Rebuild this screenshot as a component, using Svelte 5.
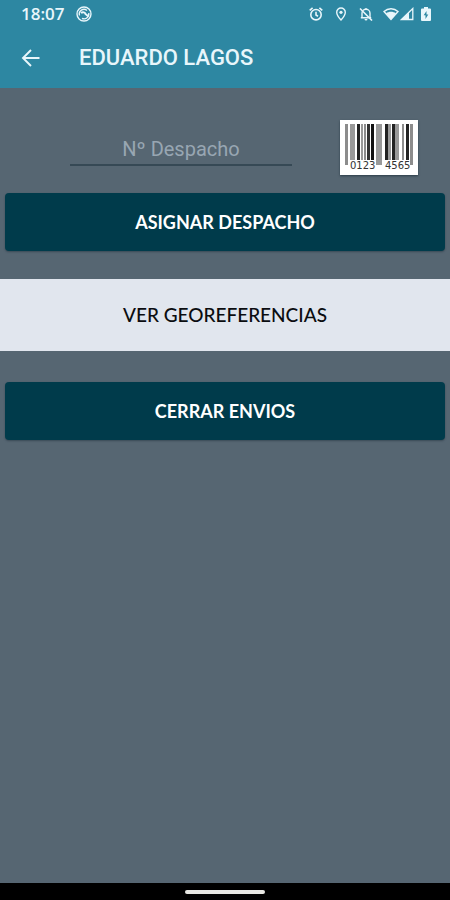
<script lang="ts">
  let despacho = $state("");

  // x, width, shade, long bar
  const BARS: Array<[number, number, string, boolean]> = [
    [5, 3, "#8c8c8c", true],
    [10, 5, "#999", false],
    [17, 3, "#222", false],
    [21, 2, "#999", false],
    [24, 2, "#8c8c8c", false],
    [27, 3, "#333", false],
    [31, 3, "#111", false],
    [36, 6, "#999", true],
    [45, 3, "#222", false],
    [48, 3, "#999", false],
    [52, 3, "#222", false],
    [55, 4, "#999", false],
    [62, 2, "#8c8c8c", false],
    [66, 3, "#222", false],
    [70, 3, "#8c8c8c", true],
  ];
</script>

<div class="screen">
  <div class="status">
    <div class="left">
      <span class="time">18:07</span>
      <svg width="16" height="16" viewBox="0 0 16 16" aria-hidden="true">
        <g fill="none" stroke="currentColor" stroke-width="1.4">
          <circle cx="8" cy="8" r="7" />
          <path d="M3.5 9.5A4.700 4.700 0 0 1 11 4.500M12.700 7A4.700 4.700 0 0 1 6 12.300" />
          <path d="M5 7c2-1.500 4-.5 4.500 1l3 2.500" stroke-width="2" />
        </g>
      </svg>
    </div>
    <div class="icons" aria-hidden="true">
      <svg class="alarm" width="14" height="14" viewBox="0 0 14 14">
        <g fill="none" stroke="currentColor" stroke-width="1.6">
          <circle cx="7" cy="7.700" r="5.200" />
          <path d="M7 4.800v3.200l2 1.200M.7 3.300l2.900-2.500M13.300 3.300l-2.900-2.500" />
        </g>
      </svg>
      <svg class="pin" width="12" height="14" viewBox="0 0 12 14">
        <path d="M6 1a4.300 4.300 0 0 0-4.300 4.300C1.700 8.500 6 13 6 13s4.300-4.500 4.300-7.700A4.300 4.300 0 0 0 6 1z" fill="none" stroke="currentColor" stroke-width="1.400" />
        <circle cx="6" cy="5.300" r="1.600" fill="currentColor" />
      </svg>
      <svg class="bell" width="14" height="14" viewBox="0 0 14 14">
        <path d="M3 10.700h8V6.300a4 4 0 0 0-8 0v4.400zM1.800 10.700h10.400M7 1v1.500" fill="none" stroke="currentColor" stroke-width="1.400" />
        <path d="M5.500 12h3a1.500 1.500 0 0 1-3 0z" fill="currentColor" />
        <path d="M1 1.500l12 12" stroke="currentColor" stroke-width="1.600" />
      </svg>
      <svg class="wifi" width="16" height="14" viewBox="0 0 16 14">
        <path d="M1 4.500C5 .8 11 .8 15 4.500L8 12.500z" fill="none" stroke="currentColor" stroke-width="1.400" />
        <path d="M3 6.300C6 4.300 10 4.300 13 6.300L8 12.500z" fill="currentColor" />
      </svg>
      <svg class="signal" width="14" height="14" viewBox="0 0 14 14">
        <path d="M12.800 1.500v11H1.500z" fill="none" stroke="currentColor" stroke-width="1.300" />
        <path d="M9 5.400v7.100H1.500z" fill="currentColor" />
      </svg>
      <svg class="battery" width="10" height="14" viewBox="0 0 10 14">
        <path d="M3 0h4v1.500h2q1 0 1 1V13q0 1-1 1H1q-1 0-1-1V2.500q0-1 1-1h2z" fill="currentColor" />
        <path d="M5.500 4L2.700 8.300h1.800V12l2.800-4.600H5.500z" fill="#2d87a2" />
      </svg>
    </div>
  </div>

  <header>
    <button class="back" aria-label="Volver">
      <svg width="20" height="20" viewBox="0 0 20 20">
        <path d="M18.500 10H2.500M10 2L2 10l8 8" fill="none" stroke="currentColor" stroke-width="1.900" />
      </svg>
    </button>
    <h1>EDUARDO LAGOS</h1>
  </header>

  <main>
    <div class="entry">
      <input type="text" placeholder="Nº Despacho" aria-label="Nº Despacho" bind:value={despacho} />
      <button class="scan" aria-label="Escanear código">
        <svg width="78" height="55" viewBox="0 0 78 55">
          {#each BARS as [x, w, shade, long]}
            <rect {x} y="4" width={w} height={long ? 41 : 36} fill={shade} />
          {/each}
          <text x="10" y="49">0123</text>
          <text x="45" y="49">4565</text>
        </svg>
      </button>
    </div>

    <button class="primary">ASIGNAR DESPACHO</button>
    <button class="plain">VER GEOREFERENCIAS</button>
    <button class="primary">CERRAR ENVIOS</button>
  </main>

  <div class="nav"><span class="pill"></span></div>
</div>

<style>
  :global(body) {
    background: #566672;
  }
  .screen {
    display: flex;
    flex-direction: column;
    min-height: 100vh;
    background: #566672;
    font-family: Roboto, "Liberation Sans", sans-serif;
  }
  button {
    border: 0;
    cursor: pointer;
  }
  svg {
    display: block;
  }
  .status {
    display: flex;
    align-items: center;
    justify-content: space-between;
    height: 28px;
    padding: 0 19px 0 21px;
    background: #2d87a2;
    color: #e8f6fb;
  }
  .left {
    display: flex;
    align-items: center;
    gap: 11px;
  }
  .time {
    font-family: "Open Sans", sans-serif;
    font-size: 17px;
    font-weight: 600;
    line-height: 28px;
  }
  .icons {
    display: flex;
    align-items: center;
  }
  .pin,
  .bell {
    margin-left: 12px;
  }
  .wifi {
    margin-left: 10px;
  }
  .signal {
    margin-left: 1px;
  }
  .battery {
    margin-left: 7px;
  }

  header {
    display: flex;
    align-items: center;
    gap: 38px;
    height: 60px;
    padding: 0 21px;
    background: #2d87a2;
    color: #e8f6fb;
  }
  .back {
    padding: 0;
    background: none;
    color: inherit;
  }
  h1 {
    margin: 0;
    font-size: 22px;
    font-weight: 500;
    line-height: 28px;
  }

  main {
    flex: 1;
    padding-top: 32px;
  }
  .entry {
    display: flex;
    align-items: flex-start;
    gap: 48px;
    padding: 0 32px 0 70px;
    margin-bottom: 18px;
  }
  input {
    flex: 1;
    min-width: 0;
    box-sizing: border-box;
    height: 46px;
    padding: 16px 0 2px;
    border: 0;
    border-bottom: 2px solid #364955;
    background: none;
    color: #fff;
    font: 20px/26px Roboto, sans-serif;
    text-align: center;
    outline: none;
  }
  input::placeholder {
    color: #98a6b2;
    opacity: 1;
  }
  .scan {
    padding: 0;
    background: #fff;
    box-shadow: 0 1px 2px #2b3c48;
  }
  .scan text {
    font: 10px "DejaVu Sans", sans-serif;
    fill: #333;
  }

  .primary,
  .plain {
    display: block;
    font-family: Lato, sans-serif;
    font-size: 18px;
    font-weight: 700;
    line-height: 24px;
  }
  .primary {
    width: calc(100% - 10px);
    margin: 0 5px;
    padding: 17px 0;
    border-radius: 4px;
    background: #003b4b;
    color: #fff;
    box-shadow: 0 1px 2px #3a4a56;
  }
  .plain {
    width: 100%;
    margin: 28px 0 31px;
    padding: 24px 0;
    background: #e1e6ee;
    color: #0b0d10;
    font-size: 19px;
    font-weight: 500;
  }

  .nav {
    display: flex;
    align-items: center;
    justify-content: center;
    height: 17px;
    background: #000;
  }
  .pill {
    width: 80px;
    height: 4px;
    border-radius: 2px;
    background: #e8e8e4;
  }
</style>
